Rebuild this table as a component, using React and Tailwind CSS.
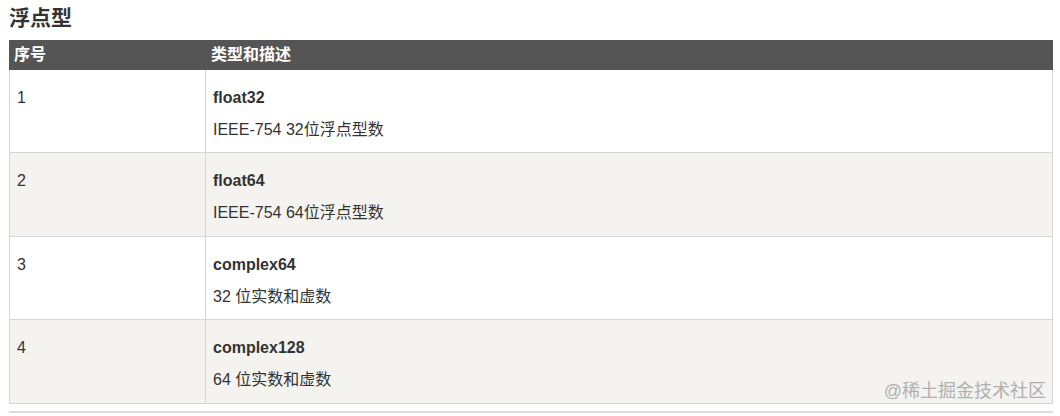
import React from "react";

const rows = [
  { n: "1", t: "float32", d: "IEEE-754 32位浮点型数", bg: "bg-white", h: "h-[83px]" },
  { n: "2", t: "float64", d: "IEEE-754 64位浮点型数", bg: "bg-[#f4f3f0]", h: "h-[84px]" },
  { n: "3", t: "complex64", d: "32 位实数和虚数", bg: "bg-white", h: "h-[83px]" },
  { n: "4", t: "complex128", d: "64 位实数和虚数", bg: "bg-[#f4f3f0]", h: "h-[84px]" },
];

export default function App() {
  return (
    <div
      className="relative w-[1060px] h-[416px] bg-white overflow-hidden text-[#333]"
      style={{ fontFamily: '"Liberation Sans", Arial, "Noto Sans CJK SC", sans-serif' }}
    >
      <div className="h-[40px] pl-[9px] pt-[3px]">
        <h3 className="text-[21px] font-bold leading-[29px] text-[#333]">浮点型</h3>
      </div>
      <div className="ml-[9px] w-[1044px]">
        <div className="flex h-[30px] bg-[#555555] text-white text-[16px] font-bold leading-[30px]">
          <div className="w-[197px] pl-[5px]">序号</div>
          <div className="flex-1 pl-[5px]">类型和描述</div>
        </div>
        {rows.map((r) => (
          <div
            key={r.n}
            className={`flex ${r.h} ${r.bg} border-l border-r border-b border-[#d6d6d6] text-[16px]`}
          >
            <div className="w-[196px] border-r border-[#d6d6d6] pl-[7px] pt-[17px] leading-[22px]">
              {r.n}
            </div>
            <div className="flex-1 pl-[7px] pt-[17px]">
              <p className="font-bold leading-[22px] text-[#333]">{r.t}</p>
              <p className="mt-[10px] leading-[22px] text-[#333]">{r.d}</p>
            </div>
          </div>
        ))}
        <div className="mt-[7px] h-[2px] bg-[#dcdcdc]" />
      </div>
      <div className="absolute right-[14px] top-[379px] text-[18px] leading-[24px] text-[#b0b0b0]">
        @稀土掘金技术社区
      </div>
    </div>
  );
}
